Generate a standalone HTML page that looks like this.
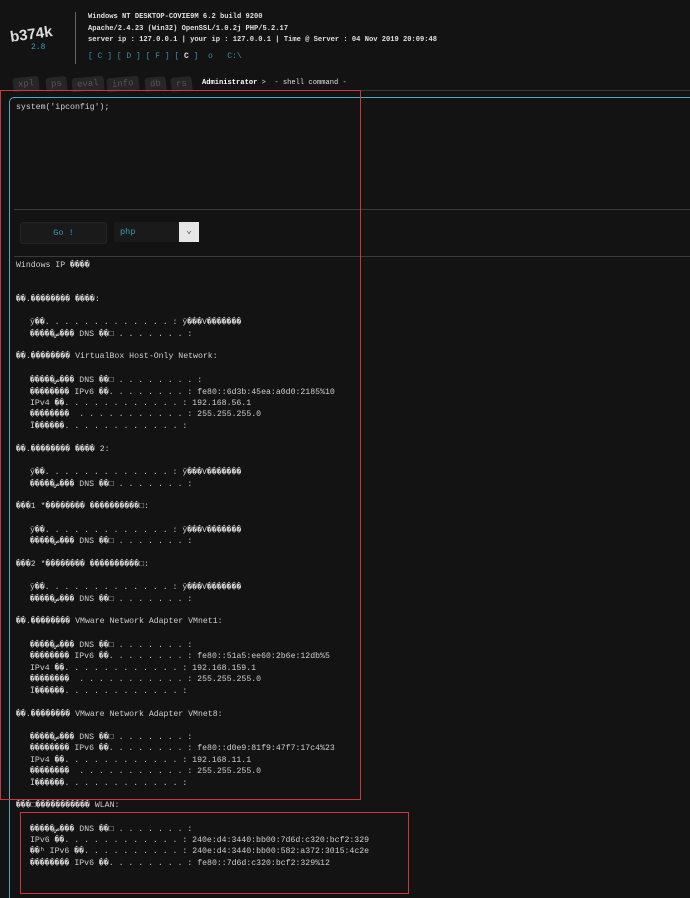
<!DOCTYPE html>
<html><head><meta charset="utf-8"><style>
html,body{margin:0;padding:0}
body{width:690px;height:878px;background:#131313;position:relative;overflow:hidden;font-family:"Liberation Mono","DejaVu Sans Mono",monospace;color:#cfcfcf}
.a{position:absolute;white-space:pre;font-size:8.2px;line-height:10px}
.h{position:absolute;white-space:pre;font-size:7.1px;font-weight:bold;color:#e0e0e0}
.tab{position:absolute;top:77px;height:14px;padding:0 5px;background:#262626;color:#555;font-size:9px;line-height:14px;border-radius:3px 3px 0 0;transform:rotate(-5deg)}
</style></head><body>
<div style="position:absolute;left:10px;top:26px;font-family:'Liberation Sans',sans-serif;font-weight:bold;font-size:15px;color:#ddd;transform:rotate(-8deg)">b374k</div>
<div style="position:absolute;left:31px;top:43px;font-size:8px;color:#3aa0b8">2.8</div>
<div style="position:absolute;left:75px;top:12px;width:1px;height:52px;background:#666"></div>
<div class="h" style="left:88px;top:13px">Windows NT DESKTOP-COVIE9M 6.2 build 9200</div>
<div class="h" style="left:88px;top:25px">Apache/2.4.23 (Win32) OpenSSL/1.0.2j PHP/5.2.17</div>
<div class="h" style="left:88px;top:36px">server ip : 127.0.0.1 | your ip : 127.0.0.1 | Time @ Server : 04 Nov 2019 20:09:48</div>
<div class="h" style="left:88px;top:52px;color:#3a8fa8;font-weight:normal;font-size:8px">[ C ] [ D ] [ F ] [ <b style="color:#ddd">C</b> ]  o   C:\</div>
<div class="tab" style="left:13px">xpl</div>
<div class="tab" style="left:46px">ps</div>
<div class="tab" style="left:72px">eval</div>
<div class="tab" style="left:107px">info</div>
<div class="tab" style="left:145px">db</div>
<div class="tab" style="left:171px">rs</div>
<div class="h" style="left:202px;top:79px"><span style="color:#fff">Administrator</span> <span style="font-weight:normal">&gt;  - shell command -</span></div>
<div style="position:absolute;left:0;top:90px;width:690px;height:1px;background:#3a3a3a"></div>
<div style="position:absolute;left:9px;top:97px;width:700px;height:800px;border-left:1px solid #4aa8c0;border-top:1px solid #4aa8c0;border-radius:5px 0 0 0"></div>
<div class="a" style="left:16px;top:103px">system('ipconfig');</div>
<div style="position:absolute;left:14px;top:209px;width:676px;height:1px;background:#3a3a3a"></div>
<div style="position:absolute;left:20px;top:222px;width:85px;height:20px;background:#1a1a1a;border:1px solid #252525;border-radius:3px;color:#3a9fb8;font-size:8.6px;line-height:20px;text-align:center">Go !</div>
<div style="position:absolute;left:114px;top:222px;width:66px;height:20px;background:#1a1a1a;color:#3a9fb8;font-size:8.6px;line-height:20px;text-indent:6px">php</div>
<div style="position:absolute;left:179px;top:222px;width:20px;height:20px;background:#e6e6e6;color:#555;font-size:10px;text-align:center;line-height:20px">&#8964;</div>
<div style="position:absolute;left:14px;top:256px;width:676px;height:1px;background:#3a3a3a"></div>
<div class="a" style="left:16px;top:261px">Windows IP ����</div>
<div class="a" style="left:16px;top:295px">��.�������� ����:</div>
<div class="a" style="left:30px;top:318px">ȳ��. . . . . . . . . . . . . : ȳ���V�������</div>
<div class="a" style="left:30px;top:330px">�����ص��� DNS ��□ . . . . . . . :</div>
<div class="a" style="left:16px;top:352px">��.�������� VirtualBox Host-Only Network:</div>
<div class="a" style="left:30px;top:376px">�����ص��� DNS ��□ . . . . . . . . :</div>
<div class="a" style="left:30px;top:388px">�������� IPv6 ��. . . . . . . . : fe80::6d3b:45ea:a0d0:2185%10</div>
<div class="a" style="left:30px;top:399px">IPv4 ��. . . . . . . . . . . . : 192.168.56.1</div>
<div class="a" style="left:30px;top:410px">��������  . . . . . . . . . . . : 255.255.255.0</div>
<div class="a" style="left:30px;top:422px">Ĭ������. . . . . . . . . . . . :</div>
<div class="a" style="left:16px;top:445px">��.�������� ���� 2:</div>
<div class="a" style="left:30px;top:468px">ȳ��. . . . . . . . . . . . . : ȳ���V�������</div>
<div class="a" style="left:30px;top:480px">�����ص��� DNS ��□ . . . . . . . :</div>
<div class="a" style="left:16px;top:502px">���1 *�������� ����������□:</div>
<div class="a" style="left:30px;top:526px">ȳ��. . . . . . . . . . . . . : ȳ���V�������</div>
<div class="a" style="left:30px;top:537px">�����ص��� DNS ��□ . . . . . . . :</div>
<div class="a" style="left:16px;top:560px">���2 *�������� ����������□:</div>
<div class="a" style="left:30px;top:583px">ȳ��. . . . . . . . . . . . . : ȳ���V�������</div>
<div class="a" style="left:30px;top:595px">�����ص��� DNS ��□ . . . . . . . :</div>
<div class="a" style="left:16px;top:617px">��.�������� VMware Network Adapter VMnet1:</div>
<div class="a" style="left:30px;top:641px">�����ص��� DNS ��□ . . . . . . . :</div>
<div class="a" style="left:30px;top:652px">�������� IPv6 ��. . . . . . . . : fe80::51a5:ee60:2b6e:12db%5</div>
<div class="a" style="left:30px;top:664px">IPv4 ��. . . . . . . . . . . . : 192.168.159.1</div>
<div class="a" style="left:30px;top:675px">��������  . . . . . . . . . . . : 255.255.255.0</div>
<div class="a" style="left:30px;top:687px">Ĭ������. . . . . . . . . . . . :</div>
<div class="a" style="left:16px;top:710px">��.�������� VMware Network Adapter VMnet8:</div>
<div class="a" style="left:30px;top:733px">�����ص��� DNS ��□ . . . . . . . :</div>
<div class="a" style="left:30px;top:744px">�������� IPv6 ��. . . . . . . . : fe80::d0e9:81f9:47f7:17c4%23</div>
<div class="a" style="left:30px;top:756px">IPv4 ��. . . . . . . . . . . . : 192.168.11.1</div>
<div class="a" style="left:30px;top:767px">��������  . . . . . . . . . . . : 255.255.255.0</div>
<div class="a" style="left:30px;top:779px">Ĭ������. . . . . . . . . . . . :</div>
<div class="a" style="left:16px;top:801px">���□����������� WLAN:</div>
<div class="a" style="left:30px;top:825px">�����ص��� DNS ��□ . . . . . . . :</div>
<div class="a" style="left:30px;top:836px">IPv6 ��. . . . . . . . . . . . : 240e:d4:3440:bb00:7d6d:c320:bcf2:329</div>
<div class="a" style="left:30px;top:847px">��ʱ IPv6 ��. . . . . . . . . . : 240e:d4:3440:bb00:582:a372:3015:4c2e</div>
<div class="a" style="left:30px;top:859px">�������� IPv6 ��. . . . . . . . : fe80::7d6d:c320:bcf2:329%12</div>
<div style="position:absolute;left:0;top:90px;width:359px;height:708px;border:1.5px solid #d0343c"></div>
<div style="position:absolute;left:20px;top:812px;width:387px;height:80px;border:1.5px solid #d0343c"></div>
</body></html>
